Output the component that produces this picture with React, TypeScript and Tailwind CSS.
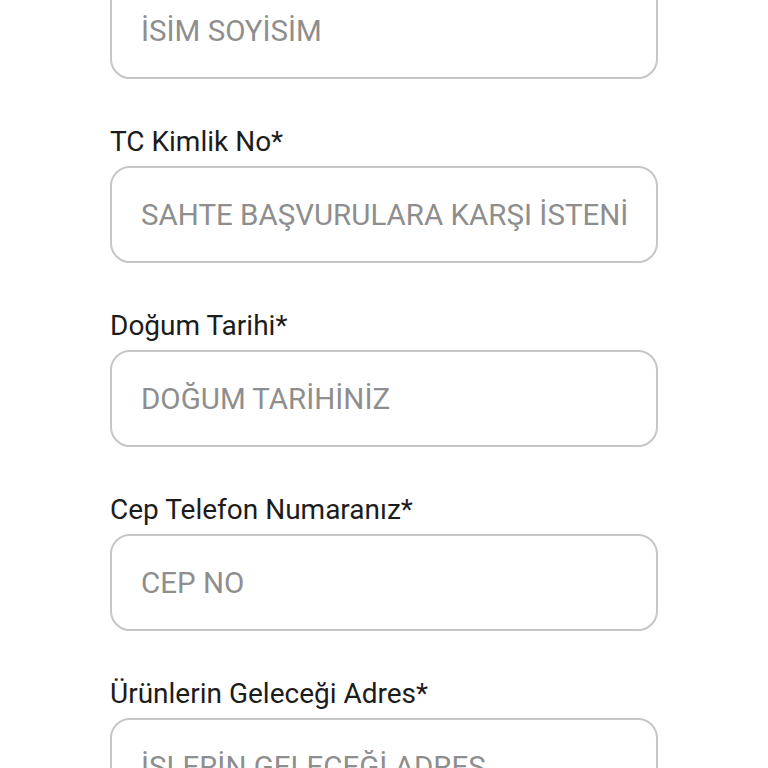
import React from "react";

type Field = {
  label?: string;
  placeholder: string;
};

const fields: Field[] = [
  { placeholder: "İSİM SOYİSİM" },
  { label: "TC Kimlik No*", placeholder: "SAHTE BAŞVURULARA KARŞI İSTENİLMEKTEDİR" },
  { label: "Doğum Tarihi*", placeholder: "DOĞUM TARİHİNİZ" },
  { label: "Cep Telefon Numaranız*", placeholder: "CEP NO" },
  { label: "Ürünlerin Geleceği Adres*", placeholder: "İŞLERİN GELECEĞİ ADRES" },
];

function FormField({ label, placeholder }: Field) {
  return (
    <div className="flex flex-col">
      {label && (
        <label className="mb-[9px] h-[30px] text-[28px] leading-[30px] text-[#1c1c1c]">
          {label}
        </label>
      )}
      <input
        type="text"
        placeholder={placeholder}
        className="h-[97px] w-full rounded-[20px] border-2 border-[#c6c6c6] bg-white px-[29px] text-[29.5px] text-[#222] outline-none placeholder:text-[#8e8e8e]"
      />
    </div>
  );
}

export default function App() {
  return (
    <div
      className="h-[768px] w-[768px] overflow-hidden bg-white"
      style={{ fontFamily: "Roboto, 'Noto Sans', sans-serif" }}
    >
      <div className="ml-[110px] mt-[-18px] flex w-[548px] flex-col gap-[48px]">
        {fields.map((f) => (
          <FormField key={f.placeholder} {...f} />
        ))}
      </div>
    </div>
  );
}
